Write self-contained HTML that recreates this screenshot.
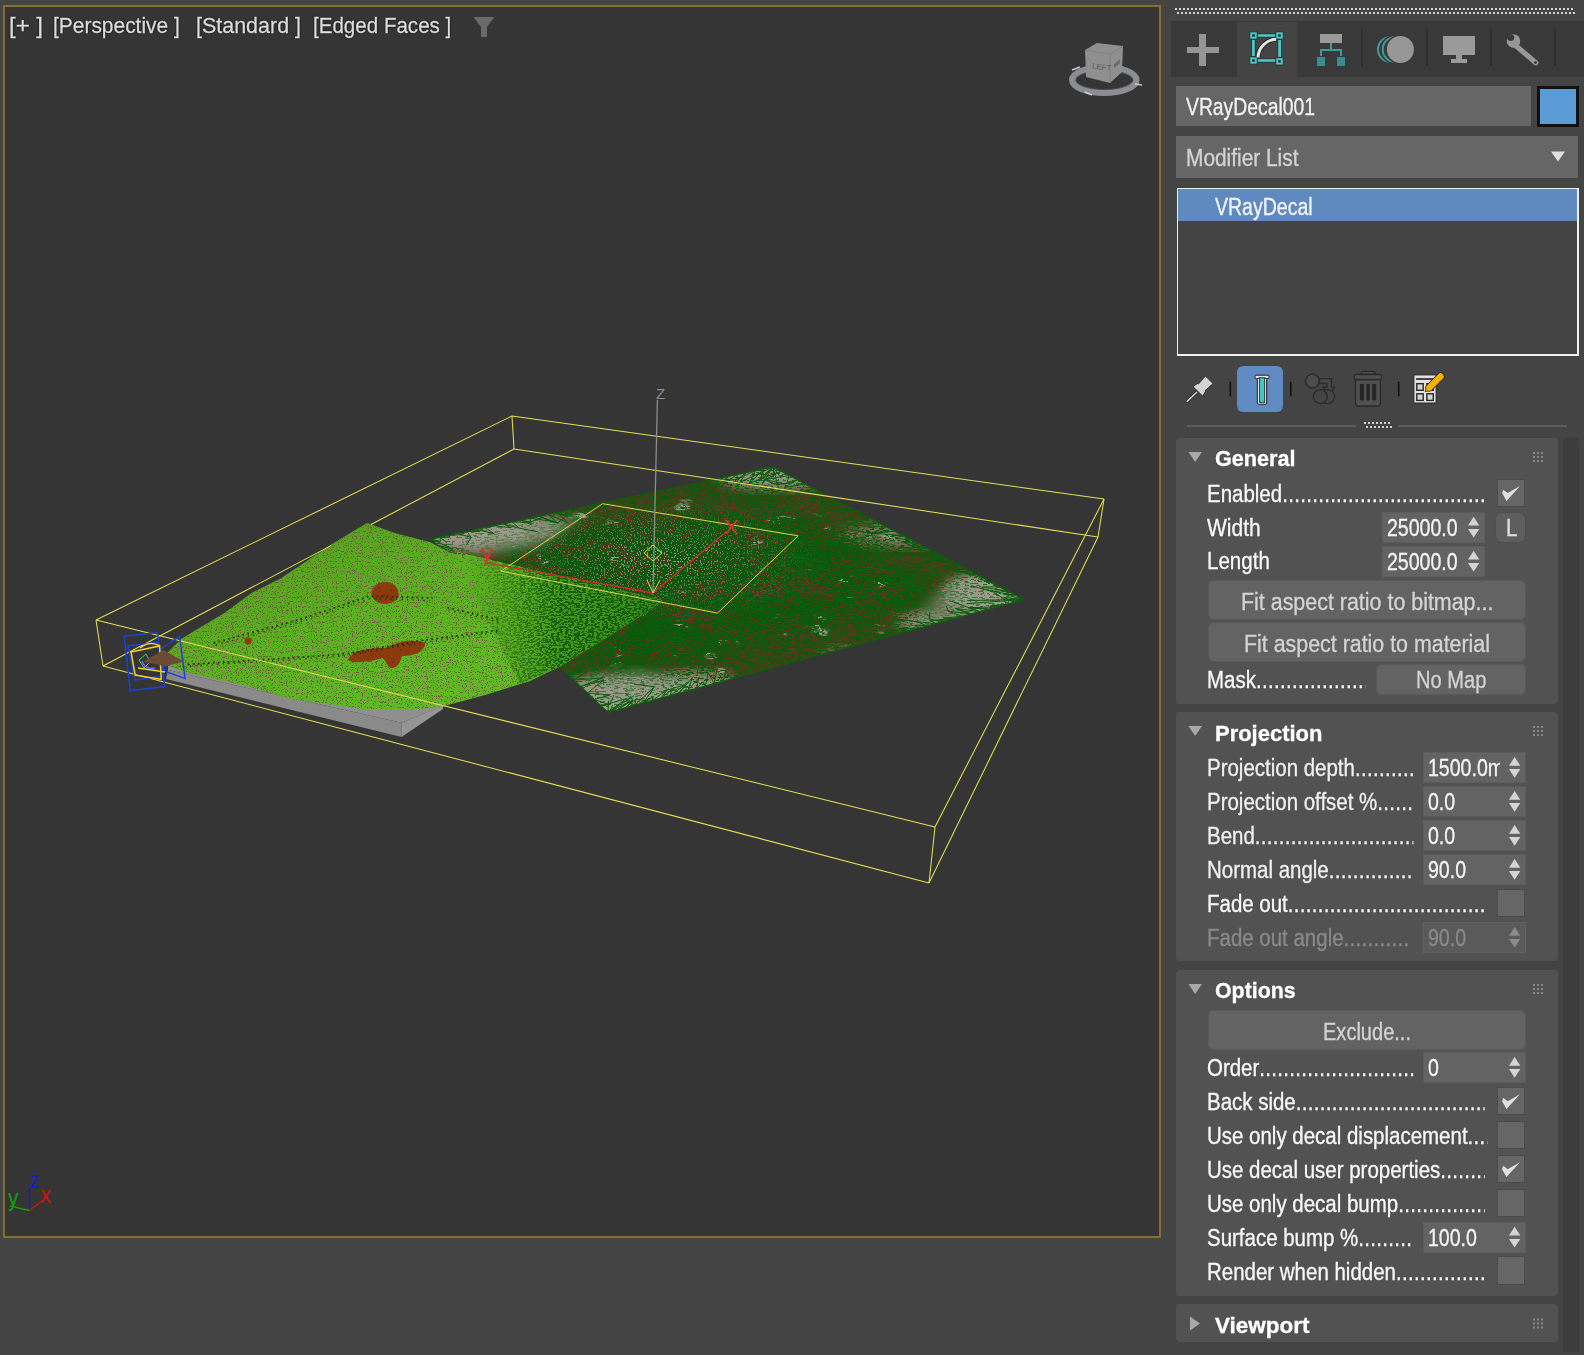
<!DOCTYPE html><html><head><meta charset="utf-8"><style>
html,body{margin:0;padding:0;}
body{width:1584px;height:1355px;background:#444444;position:relative;overflow:hidden;font-family:"Liberation Sans",sans-serif;}
.t{position:absolute;white-space:nowrap;transform-origin:0 0;-webkit-text-stroke:0.3px currentColor;}
.r{position:absolute;}
svg{position:absolute;left:0;top:0;}
</style></head><body>
<div class="r" style="left:3px;top:5px;width:1158px;height:1233px;background:#82702c;"></div>
<div class="r" style="left:5px;top:7px;width:1154px;height:1229px;background:#353535;"></div>
<svg width="1584" height="1355" viewBox="0 0 1584 1355">
<defs>
<clipPath id="vp"><rect x="5" y="7" width="1154" height="1229"/></clipPath>
<clipPath id="cdark"><polygon points="431.0,539.0 773.0,467.0 1024.0,599.5 608.0,712.5 560.0,667.0"/></clipPath>
<clipPath id="cgreen"><polygon points="158.0,662.0 181.5,638.8 224.4,613.0 252.3,592.6 280.2,578.7 331.7,544.3 367.1,522.9 396.1,533.6 430.4,542.2 450.0,553.0 478.0,557.0 662.0,600.0 652.0,609.0 561.0,666.0 530.0,681.0 485.0,695.0 444.0,706.0 420.0,709.0 362.0,709.0 291.0,699.0 251.0,687.0 185.0,672.0"/></clipPath>
<clipPath id="cmix"><polygon points="450.0,550.0 662.0,600.0 652.0,609.0 561.0,666.0 520.0,684.0"/></clipPath>
<filter id="beige" x="0" y="0" width="100%" height="100%" color-interpolation-filters="sRGB">
 <feTurbulence type="fractalNoise" baseFrequency="0.03 0.08" numOctaves="3" seed="3"/>
 <feColorMatrix type="matrix" values="0 0 0 0 0.62  0 0 0 0 0.6  0 0 0 0 0.55  -12 0 0 0 3.5"/>
</filter>
<filter id="greenspeck" x="0" y="0" width="100%" height="100%" color-interpolation-filters="sRGB">
 <feTurbulence type="fractalNoise" baseFrequency="0.2 0.7" numOctaves="2" seed="21"/>
 <feColorMatrix type="matrix" values="0 0 0 0 0.04  0 0 0 0 0.36  0 0 0 0 0.04  14 0 0 0 -7.6"/>
 <feComponentTransfer><feFuncA type="discrete" tableValues="0 1"/></feComponentTransfer>
</filter>
<filter id="greenspeck2" x="0" y="0" width="100%" height="100%" color-interpolation-filters="sRGB">
 <feTurbulence type="fractalNoise" baseFrequency="0.2 0.7" numOctaves="2" seed="22"/>
 <feColorMatrix type="matrix" values="0 0 0 0 0.04  0 0 0 0 0.36  0 0 0 0 0.04  14 0 0 0 -4.6"/>
 <feComponentTransfer><feFuncA type="discrete" tableValues="0 1"/></feComponentTransfer>
</filter>
<filter id="mottle" x="0" y="0" width="100%" height="100%" color-interpolation-filters="sRGB">
 <feTurbulence type="fractalNoise" baseFrequency="0.018 0.05" numOctaves="2" seed="4" result="low"/>
 <feColorMatrix in="low" type="matrix" values="1 0 0 0 0  1 0 0 0 0  1 0 0 0 0  0 0 0 0 1" result="lowo"/>
 <feTurbulence type="fractalNoise" baseFrequency="0.22 0.75" numOctaves="1" seed="8" result="high"/>
 <feColorMatrix in="high" type="matrix" values="1 0 0 0 0  1 0 0 0 0  1 0 0 0 0  0 0 0 0 1" result="higho"/>
 <feComposite in="lowo" in2="higho" operator="arithmetic" k1="0" k2="0.3" k3="0.7" k4="0" result="sum"/>
 <feColorMatrix in="sum" type="matrix" values="0 0 0 0 0.04  0 0 0 0 0.35  0 0 0 0 0.04  16 0 0 0 -6.9"/>
 <feComponentTransfer><feFuncA type="discrete" tableValues="0 1"/></feComponentTransfer>
</filter>
<filter id="grayspeck" x="0" y="0" width="100%" height="100%" color-interpolation-filters="sRGB">
 <feTurbulence type="fractalNoise" baseFrequency="0.7" numOctaves="1" seed="31"/>
 <feColorMatrix type="matrix" values="0 0 0 0 0.62  0 0 0 0 0.6  0 0 0 0 0.58  14 0 0 0 -8.0"/>
 <feComponentTransfer><feFuncA type="discrete" tableValues="0 1"/></feComponentTransfer>
</filter>
<filter id="olivespeck" x="0" y="0" width="100%" height="100%" color-interpolation-filters="sRGB">
 <feTurbulence type="fractalNoise" baseFrequency="0.8" numOctaves="1" seed="5"/>
 <feColorMatrix type="matrix" values="0 0 0 0 0.42  0 0 0 0 0.40  0 0 0 0 0.22  14 0 0 0 -8.0"/>
 <feComponentTransfer><feFuncA type="discrete" tableValues="0 1"/></feComponentTransfer>
</filter>
<filter id="mixspeck" x="0" y="0" width="100%" height="100%" color-interpolation-filters="sRGB">
 <feTurbulence type="fractalNoise" baseFrequency="0.35 0.6" numOctaves="1" seed="11"/>
 <feColorMatrix type="matrix" values="0 0 0 0 0.36  0 0 0 0 0.69  0 0 0 0 0.12  14 0 0 0 -6.6"/>
 <feComponentTransfer><feFuncA type="discrete" tableValues="0 1"/></feComponentTransfer>
</filter>
<filter id="blur1" color-interpolation-filters="sRGB"><feGaussianBlur stdDeviation="6"/></filter>
<linearGradient id="gmix" x1="474" y1="600" x2="640" y2="600" gradientUnits="userSpaceOnUse"><stop offset="0" stop-color="#5aae1f"/><stop offset="0.25" stop-color="#4f9f1c"/><stop offset="1" stop-color="#2c7614"/></linearGradient>
<linearGradient id="gshade" x1="300" y1="555" x2="360" y2="705" gradientUnits="userSpaceOnUse"><stop offset="0" stop-color="#4a6a18" stop-opacity="0.22"/><stop offset="0.5" stop-color="#4a6a18" stop-opacity="0.05"/><stop offset="1" stop-color="#8ee040" stop-opacity="0.08"/></linearGradient>
<radialGradient id="cgray" cx="0.5" cy="0.5" r="0.5"><stop offset="0" stop-color="#fff" stop-opacity="1"/><stop offset="1" stop-color="#fff" stop-opacity="0"/></radialGradient>
<linearGradient id="gmixa" x1="474" y1="600" x2="660" y2="600" gradientUnits="userSpaceOnUse"><stop offset="0" stop-color="#fff" stop-opacity="1"/><stop offset="0.25" stop-color="#fff" stop-opacity="0.8"/><stop offset="1" stop-color="#fff" stop-opacity="0.5"/></linearGradient>
<mask id="mmix"><rect x="440" y="540" width="240" height="150" fill="url(#gmixa)"/></mask>
<linearGradient id="gmixd" x1="465" y1="0" x2="560" y2="0" gradientUnits="userSpaceOnUse"><stop offset="0" stop-color="#fff" stop-opacity="0"/><stop offset="1" stop-color="#fff" stop-opacity="1"/></linearGradient>
<mask id="mmixd"><rect x="440" y="540" width="240" height="150" fill="url(#gmixd)"/></mask>
<mask id="mgray"><ellipse cx="660" cy="560" rx="170" ry="62" fill="url(#cgray)"/></mask>
<filter id="blur2" color-interpolation-filters="sRGB"><feGaussianBlur stdDeviation="14"/></filter>
<mask id="minner"><polygon points="480.0,545.0 773.0,490.0 975.0,598.0 625.0,685.0 580.0,660.0" fill="#fff" filter="url(#blur2)"/></mask>
</defs>
<g clip-path="url(#vp)">
<polygon points="168.0,666.0 443.0,700.0 443.0,706.0 401.5,722.8 168.0,670.0" fill="#8f8f8f"/>
<polygon points="168.0,670.0 401.5,722.8 401.5,737.0 166.0,679.0" fill="#8a8a8a"/>
<polygon points="401.5,722.8 443.0,705.7 443.0,709.0 401.5,737.0" fill="#959595"/>
<polygon points="431.0,539.0 773.0,467.0 1024.0,599.5 608.0,712.5 560.0,667.0" fill="#523a1e"/>
<g clip-path="url(#cdark)">
<rect x="420" y="460" width="620" height="260" filter="url(#beige)"/>
<ellipse cx="1010" cy="596" rx="70" ry="26" fill="#a39f90" opacity="1.0" filter="url(#blur1)"/>
<ellipse cx="640" cy="700" rx="95" ry="26" fill="#a39f90" opacity="1.0" filter="url(#blur1)"/>
<ellipse cx="773" cy="475" rx="55" ry="16" fill="#a39f90" opacity="0.9" filter="url(#blur1)"/>
<ellipse cx="470" cy="533" rx="60" ry="16" fill="#a39f90" opacity="1.0" filter="url(#blur1)"/>
<ellipse cx="520" cy="527" rx="45" ry="12" fill="#a39f90" opacity="0.9" filter="url(#blur1)"/>
<ellipse cx="900" cy="535" rx="60" ry="14" fill="#a39f90" opacity="0.6" filter="url(#blur1)"/>
<ellipse cx="700" cy="690" rx="40" ry="20" fill="#a39f90" opacity="0.8" filter="url(#blur1)"/>
<ellipse cx="950" cy="622" rx="55" ry="12" fill="#a39f90" opacity="0.8" filter="url(#blur1)"/>
<ellipse cx="860" cy="655" rx="40" ry="10" fill="#a39f90" opacity="0.6" filter="url(#blur1)"/>
<g mask="url(#minner)"><rect x="420" y="460" width="620" height="260" filter="url(#mottle)"/></g>
<rect x="420" y="460" width="620" height="260" filter="url(#greenspeck)"/>
<g mask="url(#mgray)"><rect x="480" y="490" width="360" height="140" filter="url(#grayspeck)"/></g>
<polygon points="431.0,539.0 520.0,519.0 585.0,515.0 540.0,545.0 478.0,556.0" fill="#9a978a" opacity="0.6" filter="url(#blur1)"/>
<polygon points="1024.0,599.5 960.0,575.0 930.0,600.0 900.0,640.0 960.0,625.0" fill="#9a978a" opacity="0.45" filter="url(#blur1)"/>
<polygon points="608.0,712.5 575.0,680.0 640.0,670.0 700.0,685.0" fill="#9a978a" opacity="0.45" filter="url(#blur1)"/>
<polygon points="773.0,467.0 745.0,478.0 800.0,485.0 830.0,492.0" fill="#9a978a" opacity="0.4" filter="url(#blur1)"/>
<path d="M431.0 539.0L440.4 541.5L440.0 537.1M440.0 537.1L449.5 537.4L449.0 535.2M449.5 537.4L449.9 530.0M449.0 535.2L459.3 534.8L458.0 533.3M459.3 534.8L475.6 528.8M458.0 533.3L471.2 537.6L467.0 531.4M471.2 537.6L466.1 545.3M467.0 531.4L479.9 531.5L476.0 529.5M479.9 531.5L460.8 528.4M476.0 529.5L494.1 533.6L485.0 527.6M494.1 533.6L487.7 534.3M485.0 527.6L488.5 527.4L494.0 525.7M488.5 527.4L484.9 524.4M494.0 525.7L511.1 527.8L503.0 523.8M503.0 523.8L519.4 528.2L512.0 521.9M519.4 528.2L538.2 531.9M512.0 521.9L530.2 522.3L521.0 520.1M530.2 522.3L543.0 516.8M521.0 520.1L531.1 524.7L530.0 518.2M530.0 518.2L551.4 521.3L539.0 516.3M551.4 521.3L556.1 522.6M539.0 516.3L557.8 523.0L548.0 514.4M557.8 523.0L566.0 516.0M548.0 514.4L568.2 522.8L557.0 512.5M557.0 512.5L567.2 517.2L566.0 510.6M567.2 517.2L565.3 511.9M566.0 510.6L569.4 515.3L575.0 508.7M569.4 515.3L556.8 513.5M575.0 508.7L589.8 516.1L584.0 506.8M589.8 516.1L609.0 521.2M584.0 506.8L600.5 514.5L593.0 504.9M600.5 514.5L619.7 521.8M593.0 504.9L597.5 507.3L602.0 503.0M597.5 507.3L596.7 508.7M602.0 503.0L605.6 507.6L611.0 501.1M605.6 507.6L608.9 514.8M611.0 501.1L625.6 510.5L620.0 499.2M625.6 510.5L603.3 516.9M620.0 499.2L639.1 510.9L629.0 497.3M639.1 510.9L634.0 504.6M629.0 497.3L635.6 504.0L638.0 495.4M635.6 504.0L618.7 501.4M638.0 495.4L636.9 497.8L647.0 493.5M636.9 497.8L630.1 490.2M647.0 493.5L659.8 503.9L656.0 491.6M659.8 503.9L652.2 501.7M656.0 491.6L664.4 500.2L665.0 489.7M664.4 500.2L663.5 493.6M665.0 489.7L666.4 493.9L674.0 487.8M674.0 487.8L671.0 496.9L683.0 485.9M671.0 496.9L653.3 497.6M683.0 485.9L684.7 493.8L692.0 484.1M692.0 484.1L690.7 495.5L701.0 482.2M690.7 495.5L704.3 496.1M701.0 482.2L698.8 493.7L710.0 480.3M710.0 480.3L711.9 497.5L719.0 478.4M719.0 478.4L712.1 491.1L728.0 476.5M712.1 491.1L688.6 483.5M728.0 476.5L722.0 485.2L737.0 474.6M737.0 474.6L737.3 486.7L746.0 472.7M746.0 472.7L737.3 479.2L755.0 470.8M737.3 479.2L722.5 481.2M755.0 470.8L748.9 483.9L764.0 468.9M748.9 483.9L763.9 477.2M764.0 468.9L759.6 481.1L773.0 467.0M760.7 477.3L775.7 484.8M773.0 467.0L764.1 477.5L781.1 471.3M781.1 471.3L765.3 479.5L789.2 475.5M765.3 479.5L785.5 484.4M789.2 475.5L786.6 483.5L797.3 479.8M786.6 483.5L779.1 484.2M797.3 479.8L784.6 487.3L805.4 484.1M784.6 487.3L785.9 494.2M805.4 484.1L798.7 492.8L813.5 488.4M798.7 492.8L786.3 489.5M813.5 488.4L805.3 491.9L821.6 492.6M805.3 491.9L786.9 498.4M821.6 492.6L809.9 498.5L829.7 496.9M829.7 496.9L822.0 502.4L837.8 501.2M822.0 502.4L823.2 494.7M837.8 501.2L820.6 503.4L845.9 505.5M845.9 505.5L835.9 510.2L854.0 509.7M835.9 510.2L827.2 510.5M854.0 509.7L841.4 512.4L862.1 514.0M841.4 512.4L828.8 508.8M862.1 514.0L842.3 520.0L870.2 518.3M870.2 518.3L847.0 524.7L878.3 522.6M847.0 524.7L847.6 527.7M878.3 522.6L863.6 525.9L886.4 526.8M886.4 526.8L871.4 533.5L894.5 531.1M871.4 533.5L874.4 540.5M894.5 531.1L868.0 532.9L902.5 535.4M868.0 532.9L846.6 528.7M902.5 535.4L895.6 538.5L910.6 539.7M910.6 539.7L902.8 542.1L918.7 543.9M902.8 542.1L921.9 549.6M918.7 543.9L912.5 544.8L926.8 548.2M912.5 544.8L937.0 550.1M926.8 548.2L915.3 549.5L934.9 552.5M915.3 549.5L900.1 546.6M934.9 552.5L908.4 554.8L943.0 556.8M908.4 554.8L884.3 552.1M943.0 556.8L924.1 555.7L951.1 561.0M951.1 561.0L934.7 560.2L959.2 565.3M934.7 560.2L911.7 564.7M959.2 565.3L942.0 565.6L967.3 569.6M967.3 569.6L941.8 568.5L975.4 573.9M975.4 573.9L959.6 572.0L983.5 578.1M959.6 572.0L969.0 570.8M983.5 578.1L979.5 579.2L991.6 582.4M991.6 582.4L986.4 580.0L999.7 586.7M999.7 586.7L981.6 587.1L1007.8 591.0M1007.8 591.0L990.5 591.1L1015.9 595.2M990.5 591.1L971.0 585.7M1015.9 595.2L1003.4 594.0L1024.0 599.5M1003.4 594.0L1016.4 590.6M1003.1 598.3L990.7 590.5M1024.0 599.5L1003.4 597.3L1015.1 601.9M1015.1 601.9L1003.8 599.2L1006.3 604.3M1006.3 604.3L990.5 605.9L997.4 606.7M990.5 605.9L990.8 608.9M997.4 606.7L969.9 607.8L988.6 609.1M988.6 609.1L968.0 607.4L979.7 611.5M968.0 607.4L949.5 600.6M979.7 611.5L955.5 608.5L970.9 613.9M955.5 608.5L972.6 614.4M970.9 613.9L948.3 611.3L962.0 616.3M948.3 611.3L946.3 605.8M962.0 616.3L943.3 618.1L953.2 618.7M953.2 618.7L932.4 620.3L944.3 621.1M932.4 620.3L925.2 612.3M944.3 621.1L929.3 620.0L935.5 623.5M929.3 620.0L929.5 612.1M935.5 623.5L917.9 621.9L926.6 625.9M917.9 621.9L894.1 618.7M926.6 625.9L915.6 625.0L917.8 628.4M917.8 628.4L900.8 628.6L908.9 630.8M900.8 628.6L892.2 636.3M908.9 630.8L901.1 630.4L900.1 633.2M901.1 630.4L917.9 636.7M900.1 633.2L884.0 632.6L891.2 635.6M884.0 632.6L885.2 632.7M891.2 635.6L872.5 634.3L882.4 638.0M872.5 634.3L892.1 637.2M882.4 638.0L859.3 632.0L873.5 640.4M859.3 632.0L852.4 625.7M873.5 640.4L852.1 637.3L864.7 642.8M852.1 637.3L861.1 637.1M864.7 642.8L860.6 642.8L855.8 645.2M860.6 642.8L862.3 645.3M855.8 645.2L850.0 641.9L847.0 647.6M850.0 641.9L838.3 645.5M847.0 647.6L839.0 647.9L838.1 650.0M839.0 647.9L833.1 647.5M838.1 650.0L822.7 645.8L829.3 652.4M822.7 645.8L801.6 640.2M829.3 652.4L820.9 647.9L820.4 654.8M820.9 647.9L796.5 640.9M820.4 654.8L811.2 652.3L811.6 657.2M811.2 652.3L800.7 652.6M811.6 657.2L797.2 649.8L802.7 659.6M802.7 659.6L798.9 658.3L793.9 662.0M798.9 658.3L796.8 663.4M793.9 662.0L773.1 651.3L785.0 664.4M773.1 651.3L795.4 646.7M785.0 664.4L766.8 657.3L776.2 666.8M776.2 666.8L772.7 662.4L767.3 669.2M767.3 669.2L750.7 662.2L758.5 671.6M750.7 662.2L727.0 654.2M758.5 671.6L748.1 662.2L749.6 674.0M748.1 662.2L740.3 659.3M749.6 674.0L731.9 663.6L740.8 676.4M740.8 676.4L741.5 672.2L731.9 678.8M731.9 678.8L725.9 670.7L723.1 681.2M723.1 681.2L716.8 670.0L714.2 683.6M716.8 670.0L694.2 663.6M714.2 683.6L708.2 672.6L705.4 686.1M708.2 672.6L696.5 672.8M705.4 686.1L703.2 682.0L696.5 688.5M696.5 688.5L698.9 677.4L687.7 690.9M687.7 690.9L692.5 677.5L678.8 693.3M678.8 693.3L685.1 684.7L670.0 695.7M685.1 684.7L662.5 691.5M670.0 695.7L672.4 688.8L661.1 698.1M672.4 688.8L684.4 696.4M661.1 698.1L667.3 689.7L652.3 700.5M667.3 689.7L662.0 684.4M652.3 700.5L653.1 696.9L643.4 702.9M653.1 696.9L639.1 703.4M643.4 702.9L654.4 686.8L634.6 705.3M654.4 686.8L634.0 684.3M634.6 705.3L636.2 698.8L625.7 707.7M636.2 698.8L655.5 702.8M625.7 707.7L632.9 700.0L616.9 710.1M632.9 700.0L624.8 693.0M616.9 710.1L629.9 701.4L608.0 712.5M629.9 701.4L636.3 707.2M612.4 705.3L609.7 712.6M608.0 712.5L626.5 698.5L601.1 706.0M601.1 706.0L609.2 704.5L594.3 699.5M609.2 704.5L613.6 696.5M594.3 699.5L609.9 695.0L587.4 693.0M587.4 693.0L603.2 680.3L580.6 686.5M603.2 680.3L604.3 683.2M580.6 686.5L602.6 678.0L573.7 680.0M573.7 680.0L587.6 671.6L566.9 673.5M566.9 673.5L582.2 670.5L560.0 667.0M582.2 670.5L563.6 666.5M579.4 659.0L580.7 660.4M560.0 667.0L569.8 663.3L553.5 660.6M553.5 660.6L558.5 658.2L547.1 654.2M547.1 654.2L569.8 649.5L540.6 647.8M569.8 649.5L557.1 656.9M540.6 647.8L557.8 640.7L534.2 641.4M557.8 640.7L566.5 639.4M534.2 641.4L548.3 641.7L527.8 635.0M548.3 641.7L525.0 639.1M527.8 635.0L545.0 630.8L521.3 628.6M521.3 628.6L542.2 624.1L514.9 622.2M514.9 622.2L532.1 619.2L508.4 615.8M532.1 619.2L545.1 615.9M508.4 615.8L533.3 611.9L501.9 609.4M533.3 611.9L529.1 614.6M501.9 609.4L522.7 607.3L495.5 603.0M522.7 607.3L546.4 601.6M495.5 603.0L499.1 602.0L489.1 596.6M489.1 596.6L515.7 599.1L482.6 590.2M482.6 590.2L492.8 592.8L476.1 583.8M476.1 583.8L486.7 583.2L469.7 577.4M486.7 583.2L478.3 577.9M469.7 577.4L475.1 576.8L463.2 571.0M463.2 571.0L479.0 569.7L456.8 564.6M479.0 569.7L495.1 574.9M456.8 564.6L467.1 565.4L450.4 558.2M467.1 565.4L488.1 560.5M450.4 558.2L469.6 556.5L443.9 551.8M469.6 556.5L485.1 560.8M443.9 551.8L447.0 549.9L437.4 545.4M437.4 545.4L452.9 549.1L431.0 539.0M452.9 549.1L441.5 556.4M446.9 542.4L435.7 534.5M1024.0 599.5l2.0 -25.3M1024.0 599.5l-38.3 -19.3M1024.0 599.5l25.2 1.7M1024.0 599.5l-57.4 4.1M1024.0 599.5l31.0 -4.2M1024.0 599.5l-0.2 15.5M1024.0 599.5l-56.7 1.0M1024.0 599.5l20.9 21.0M1024.0 599.5l-3.8 -23.3M1024.0 599.5l6.0 -18.9M1024.0 599.5l-13.8 11.7M1024.0 599.5l-32.4 17.2M608.0 712.5l21.0 5.1M608.0 712.5l0.5 -11.8M608.0 712.5l15.2 2.9M608.0 712.5l-28.1 -4.3M608.0 712.5l54.3 -3.0M608.0 712.5l26.8 -0.9M608.0 712.5l16.7 4.4M608.0 712.5l-46.9 0.2M608.0 712.5l-24.1 3.8M608.0 712.5l-37.2 9.6M608.0 712.5l-22.3 -19.5M608.0 712.5l25.7 -16.6M773.0 467.0l38.3 16.4M773.0 467.0l-11.0 17.5M773.0 467.0l-33.7 15.5M773.0 467.0l8.2 11.2M773.0 467.0l0.6 9.9M773.0 467.0l30.6 -12.3M773.0 467.0l-15.1 13.1M773.0 467.0l37.8 -0.8M773.0 467.0l6.0 23.0M773.0 467.0l-34.0 -22.0M773.0 467.0l29.1 9.8M773.0 467.0l22.2 -21.6" stroke="#0c5a0c" stroke-width="1" fill="none"/>
</g>
<polygon points="431.0,539.0 773.0,467.0 1024.0,599.5 608.0,712.5 560.0,667.0" fill="none" stroke="#0e5c0e" stroke-width="1.3"/>
<polygon points="158.0,662.0 181.5,638.8 224.4,613.0 252.3,592.6 280.2,578.7 331.7,544.3 367.1,522.9 396.1,533.6 430.4,542.2 450.0,553.0 478.0,557.0 662.0,600.0 652.0,609.0 561.0,666.0 530.0,681.0 485.0,695.0 444.0,706.0 420.0,709.0 362.0,709.0 291.0,699.0 251.0,687.0 185.0,672.0" fill="#5cb421"/>
<g clip-path="url(#cgreen)">
<rect x="150" y="515" width="500" height="200" fill="url(#gshade)"/>
<rect x="150" y="515" width="500" height="200" filter="url(#olivespeck)"/>
</g>
<g clip-path="url(#cmix)">
<g mask="url(#mmixd)"><polygon points="450.0,550.0 662.0,600.0 652.0,609.0 561.0,666.0 520.0,684.0" fill="#15600f"/></g>
<g mask="url(#mmix)"><rect x="440" y="540" width="240" height="150" filter="url(#mixspeck)"/></g>
</g>
<ellipse cx="385" cy="593" rx="13.4" ry="11" fill="#8a3a0c"/>
<path d="M348 660 C352 650 368 648 385 648 C398 642 412 638 425 643 C425 652 414 656 402 656 C400 662 399 668 390 668 C386 664 386 660 382 658 C370 662 352 664 348 660Z" fill="#8a3a0c"/>
<circle cx="248" cy="641" r="3.5" fill="#8a3a0c"/>
<g opacity="0.55"><path d="M378 588l2 0M384 595l1 1M390 590l2 0M375 598l2 1M392 600l1 0M362 652l2 0M380 648l1 1M400 650l2 0M410 645l2 0M392 662l1 1M370 655l2 0" stroke="#2a3a10" stroke-width="1.5"/></g>
<path d="M213.7 643 L299.5 619.5 L370 596 L432.6 598 M447.6 607.7 L500 620 M188 664.5 L288.8 658 L346.7 653.8 L417.6 641 L500 630" stroke="#0a0e05" stroke-width="1.6" stroke-dasharray="1.5 3.5" fill="none" opacity="0.9"/>
<path d="M216 645 L301 621.5 L371 598.5 L432 600.5 M449 610 L500 622.5 M190 666 L290 660 L348 655.5 L418 643 L500 632" stroke="#0a0e05" stroke-width="1.4" stroke-dasharray="1 4.5" fill="none" opacity="0.8"/>
<path d="M336 570 L500 602" stroke="#777a66" stroke-width="1" fill="none" opacity="0.7"/>
<line x1="96" y1="620" x2="512" y2="416" stroke="#e3de52" stroke-width="1.05"/>
<line x1="512" y1="416" x2="1104" y2="499" stroke="#e3de52" stroke-width="1.05"/>
<line x1="1104" y1="499" x2="935" y2="827" stroke="#e3de52" stroke-width="1.05"/>
<line x1="935" y1="827" x2="96" y2="620" stroke="#e3de52" stroke-width="1.05"/>
<line x1="103" y1="666" x2="331" y2="545.6" stroke="#e3de52" stroke-width="1.05"/>
<line x1="371" y1="524.5" x2="514" y2="449" stroke="#e3de52" stroke-width="1.05"/>
<line x1="514" y1="449" x2="1098" y2="537" stroke="#e3de52" stroke-width="1.05"/>
<line x1="1098" y1="537" x2="929" y2="883" stroke="#e3de52" stroke-width="1.05"/>
<line x1="929" y1="883" x2="103" y2="666" stroke="#e3de52" stroke-width="1.05"/>
<line x1="96" y1="620" x2="103" y2="666" stroke="#e3de52" stroke-width="1.05"/>
<line x1="512" y1="416" x2="514" y2="449" stroke="#e3de52" stroke-width="1.05"/>
<line x1="1104" y1="499" x2="1098" y2="537" stroke="#e3de52" stroke-width="1.05"/>
<line x1="935" y1="827" x2="929" y2="883" stroke="#e3de52" stroke-width="1.05"/>
<polygon points="602.6,503.7 798.1,535.8 717.5,613.1 500.9,571.1" fill="none" stroke="#dcd64a" stroke-width="1"/>
<line x1="657.4" y1="400" x2="653" y2="593" stroke="#8c8c8c" stroke-width="1.3"/>
<text x="656" y="399" font-family="Liberation Sans" font-size="15" fill="#8c8c8c">Z</text>
<line x1="653" y1="593" x2="726" y2="532" stroke="#d02c2c" stroke-width="1.3"/>
<line x1="653" y1="593" x2="487" y2="563" stroke="#d02c2c" stroke-width="1.3"/>
<path d="M726 520 L737 534 M737 520 L726 534" stroke="#d83030" stroke-width="2"/>
<path d="M482 548 L487 559 M492 548 L485 565" stroke="#d83030" stroke-width="2"/>
<polygon points="653,545 662,553 653,561 644,553" fill="none" stroke="#dcd64a" stroke-width="1"/>
<path d="M647 580 L653 593 L660 580" stroke="#dcd64a" stroke-width="1" fill="none"/>
<g fill="none" stroke-width="1.5">
<polygon points="124.2,636.3 157.5,632.6 164.8,686.6 130.3,690.7" stroke="#1a44d6"/>
<polygon points="127.9,646 158,642 163.6,676 135.2,680" stroke="#1a44d6"/>
<polygon points="161.2,648.5 179.5,636.3 185.1,678.5 164.4,671.2" stroke="#1a44d6"/>
<polygon points="131,652 159.6,646 161.2,679.3 135.2,675.2" stroke="#f0d020"/>
<path d="M140 648 Q150 640 160 646 M138 668 L165 672" stroke="#f0d020"/>
<path d="M139 660 L146 654 L150 662 L144 668 Z" stroke="#40d060" stroke-width="1"/>
<path d="M142 661 Q145 670 155 668" stroke="#6a6af0" stroke-width="1.5"/>
</g>
<polygon points="143.3,661.4 163.6,650 183.9,661.4 165.2,666.3" fill="#6b4a35"/>
<line x1="29.5" y1="1210.5" x2="29.5" y2="1188" stroke="#1414e6" stroke-width="1.4"/>
<line x1="29.5" y1="1210.5" x2="42.5" y2="1200.5" stroke="#d01010" stroke-width="1.4"/>
<line x1="29.5" y1="1210.5" x2="10" y2="1206" stroke="#10a010" stroke-width="1.4"/>
<text transform="translate(29.8 1188.3) scale(0.82 1)" font-family="Liberation Sans" font-size="23" fill="#1414e6">z</text>
<text transform="translate(40.2 1202.5) scale(0.9 1)" font-family="Liberation Sans" font-size="24" fill="#d01010">x</text>
<text transform="translate(8 1205.5) scale(0.9 1)" font-family="Liberation Sans" font-size="23" fill="#10a010">y</text>
<ellipse cx="1104.3" cy="80" rx="32" ry="12.8" fill="none" stroke="#8a8e92" stroke-width="6.5"/>
<ellipse cx="1104.3" cy="80" rx="28.6" ry="9.6" fill="none" stroke="#4a4e52" stroke-width="0.8"/>
<polygon points="1085,50 1097,43 1123,46 1122,72 1110,83 1086,77" fill="#8f8f8f"/>
<path d="M1110 54 L1123 46 M1110 54 L1110 83 M1085 50 L1110 54" stroke="#7a7a7a" stroke-width="0.6" fill="none"/>
<text x="1092" y="69" font-family="Liberation Sans" font-size="8" fill="#5c5c5c" transform="rotate(8 1097 66)">LEFT</text>
<path d="M1120 59 L1114 64 L1114 68 L1120 63 Z" fill="#6a6a6a"/>
<path d="M1072 70 L1080 67 M1085 92 L1092 95 M1135 84 L1142 85" stroke="#c8c8c8" stroke-width="1.6"/>
</g></svg>
<div class="t" style="left:9.40px;top:15.40px;font-size:22px;line-height:22px;color:#dcdcdc;font-weight:normal;transform:scaleX(1.0902);text-shadow:0 0 2px #000,0 0 1px #000;">[+ ]</div>
<div class="t" style="left:53.00px;top:15.40px;font-size:22px;line-height:22px;color:#dcdcdc;font-weight:normal;transform:scaleX(0.9514);text-shadow:0 0 2px #000,0 0 1px #000;">[Perspective ]</div>
<div class="t" style="left:196.00px;top:15.40px;font-size:22px;line-height:22px;color:#dcdcdc;font-weight:normal;transform:scaleX(0.9756);text-shadow:0 0 2px #000,0 0 1px #000;">[Standard ]</div>
<div class="t" style="left:313.40px;top:15.40px;font-size:22px;line-height:22px;color:#dcdcdc;font-weight:normal;transform:scaleX(0.9346);text-shadow:0 0 2px #000,0 0 1px #000;">[Edged Faces ]</div>
<svg width="1584" height="60"><path d="M473.5 17 L494.3 17 L487 27 L487 37 L481 37 L481 27 Z" fill="#6a6a6a"/></svg>
<svg width="1584" height="30" style="left:0;top:0"><g fill="#d8d8d8"><rect x="1175" y="8" width="2" height="2"/><rect x="1177" y="12" width="2" height="2"/><rect x="1179" y="8" width="2" height="2"/><rect x="1181" y="12" width="2" height="2"/><rect x="1183" y="8" width="2" height="2"/><rect x="1185" y="12" width="2" height="2"/><rect x="1187" y="8" width="2" height="2"/><rect x="1189" y="12" width="2" height="2"/><rect x="1191" y="8" width="2" height="2"/><rect x="1193" y="12" width="2" height="2"/><rect x="1195" y="8" width="2" height="2"/><rect x="1197" y="12" width="2" height="2"/><rect x="1199" y="8" width="2" height="2"/><rect x="1201" y="12" width="2" height="2"/><rect x="1203" y="8" width="2" height="2"/><rect x="1205" y="12" width="2" height="2"/><rect x="1207" y="8" width="2" height="2"/><rect x="1209" y="12" width="2" height="2"/><rect x="1211" y="8" width="2" height="2"/><rect x="1213" y="12" width="2" height="2"/><rect x="1215" y="8" width="2" height="2"/><rect x="1217" y="12" width="2" height="2"/><rect x="1219" y="8" width="2" height="2"/><rect x="1221" y="12" width="2" height="2"/><rect x="1223" y="8" width="2" height="2"/><rect x="1225" y="12" width="2" height="2"/><rect x="1227" y="8" width="2" height="2"/><rect x="1229" y="12" width="2" height="2"/><rect x="1231" y="8" width="2" height="2"/><rect x="1233" y="12" width="2" height="2"/><rect x="1235" y="8" width="2" height="2"/><rect x="1237" y="12" width="2" height="2"/><rect x="1239" y="8" width="2" height="2"/><rect x="1241" y="12" width="2" height="2"/><rect x="1243" y="8" width="2" height="2"/><rect x="1245" y="12" width="2" height="2"/><rect x="1247" y="8" width="2" height="2"/><rect x="1249" y="12" width="2" height="2"/><rect x="1251" y="8" width="2" height="2"/><rect x="1253" y="12" width="2" height="2"/><rect x="1255" y="8" width="2" height="2"/><rect x="1257" y="12" width="2" height="2"/><rect x="1259" y="8" width="2" height="2"/><rect x="1261" y="12" width="2" height="2"/><rect x="1263" y="8" width="2" height="2"/><rect x="1265" y="12" width="2" height="2"/><rect x="1267" y="8" width="2" height="2"/><rect x="1269" y="12" width="2" height="2"/><rect x="1271" y="8" width="2" height="2"/><rect x="1273" y="12" width="2" height="2"/><rect x="1275" y="8" width="2" height="2"/><rect x="1277" y="12" width="2" height="2"/><rect x="1279" y="8" width="2" height="2"/><rect x="1281" y="12" width="2" height="2"/><rect x="1283" y="8" width="2" height="2"/><rect x="1285" y="12" width="2" height="2"/><rect x="1287" y="8" width="2" height="2"/><rect x="1289" y="12" width="2" height="2"/><rect x="1291" y="8" width="2" height="2"/><rect x="1293" y="12" width="2" height="2"/><rect x="1295" y="8" width="2" height="2"/><rect x="1297" y="12" width="2" height="2"/><rect x="1299" y="8" width="2" height="2"/><rect x="1301" y="12" width="2" height="2"/><rect x="1303" y="8" width="2" height="2"/><rect x="1305" y="12" width="2" height="2"/><rect x="1307" y="8" width="2" height="2"/><rect x="1309" y="12" width="2" height="2"/><rect x="1311" y="8" width="2" height="2"/><rect x="1313" y="12" width="2" height="2"/><rect x="1315" y="8" width="2" height="2"/><rect x="1317" y="12" width="2" height="2"/><rect x="1319" y="8" width="2" height="2"/><rect x="1321" y="12" width="2" height="2"/><rect x="1323" y="8" width="2" height="2"/><rect x="1325" y="12" width="2" height="2"/><rect x="1327" y="8" width="2" height="2"/><rect x="1329" y="12" width="2" height="2"/><rect x="1331" y="8" width="2" height="2"/><rect x="1333" y="12" width="2" height="2"/><rect x="1335" y="8" width="2" height="2"/><rect x="1337" y="12" width="2" height="2"/><rect x="1339" y="8" width="2" height="2"/><rect x="1341" y="12" width="2" height="2"/><rect x="1343" y="8" width="2" height="2"/><rect x="1345" y="12" width="2" height="2"/><rect x="1347" y="8" width="2" height="2"/><rect x="1349" y="12" width="2" height="2"/><rect x="1351" y="8" width="2" height="2"/><rect x="1353" y="12" width="2" height="2"/><rect x="1355" y="8" width="2" height="2"/><rect x="1357" y="12" width="2" height="2"/><rect x="1359" y="8" width="2" height="2"/><rect x="1361" y="12" width="2" height="2"/><rect x="1363" y="8" width="2" height="2"/><rect x="1365" y="12" width="2" height="2"/><rect x="1367" y="8" width="2" height="2"/><rect x="1369" y="12" width="2" height="2"/><rect x="1371" y="8" width="2" height="2"/><rect x="1373" y="12" width="2" height="2"/><rect x="1375" y="8" width="2" height="2"/><rect x="1377" y="12" width="2" height="2"/><rect x="1379" y="8" width="2" height="2"/><rect x="1381" y="12" width="2" height="2"/><rect x="1383" y="8" width="2" height="2"/><rect x="1385" y="12" width="2" height="2"/><rect x="1387" y="8" width="2" height="2"/><rect x="1389" y="12" width="2" height="2"/><rect x="1391" y="8" width="2" height="2"/><rect x="1393" y="12" width="2" height="2"/><rect x="1395" y="8" width="2" height="2"/><rect x="1397" y="12" width="2" height="2"/><rect x="1399" y="8" width="2" height="2"/><rect x="1401" y="12" width="2" height="2"/><rect x="1403" y="8" width="2" height="2"/><rect x="1405" y="12" width="2" height="2"/><rect x="1407" y="8" width="2" height="2"/><rect x="1409" y="12" width="2" height="2"/><rect x="1411" y="8" width="2" height="2"/><rect x="1413" y="12" width="2" height="2"/><rect x="1415" y="8" width="2" height="2"/><rect x="1417" y="12" width="2" height="2"/><rect x="1419" y="8" width="2" height="2"/><rect x="1421" y="12" width="2" height="2"/><rect x="1423" y="8" width="2" height="2"/><rect x="1425" y="12" width="2" height="2"/><rect x="1427" y="8" width="2" height="2"/><rect x="1429" y="12" width="2" height="2"/><rect x="1431" y="8" width="2" height="2"/><rect x="1433" y="12" width="2" height="2"/><rect x="1435" y="8" width="2" height="2"/><rect x="1437" y="12" width="2" height="2"/><rect x="1439" y="8" width="2" height="2"/><rect x="1441" y="12" width="2" height="2"/><rect x="1443" y="8" width="2" height="2"/><rect x="1445" y="12" width="2" height="2"/><rect x="1447" y="8" width="2" height="2"/><rect x="1449" y="12" width="2" height="2"/><rect x="1451" y="8" width="2" height="2"/><rect x="1453" y="12" width="2" height="2"/><rect x="1455" y="8" width="2" height="2"/><rect x="1457" y="12" width="2" height="2"/><rect x="1459" y="8" width="2" height="2"/><rect x="1461" y="12" width="2" height="2"/><rect x="1463" y="8" width="2" height="2"/><rect x="1465" y="12" width="2" height="2"/><rect x="1467" y="8" width="2" height="2"/><rect x="1469" y="12" width="2" height="2"/><rect x="1471" y="8" width="2" height="2"/><rect x="1473" y="12" width="2" height="2"/><rect x="1475" y="8" width="2" height="2"/><rect x="1477" y="12" width="2" height="2"/><rect x="1479" y="8" width="2" height="2"/><rect x="1481" y="12" width="2" height="2"/><rect x="1483" y="8" width="2" height="2"/><rect x="1485" y="12" width="2" height="2"/><rect x="1487" y="8" width="2" height="2"/><rect x="1489" y="12" width="2" height="2"/><rect x="1491" y="8" width="2" height="2"/><rect x="1493" y="12" width="2" height="2"/><rect x="1495" y="8" width="2" height="2"/><rect x="1497" y="12" width="2" height="2"/><rect x="1499" y="8" width="2" height="2"/><rect x="1501" y="12" width="2" height="2"/><rect x="1503" y="8" width="2" height="2"/><rect x="1505" y="12" width="2" height="2"/><rect x="1507" y="8" width="2" height="2"/><rect x="1509" y="12" width="2" height="2"/><rect x="1511" y="8" width="2" height="2"/><rect x="1513" y="12" width="2" height="2"/><rect x="1515" y="8" width="2" height="2"/><rect x="1517" y="12" width="2" height="2"/><rect x="1519" y="8" width="2" height="2"/><rect x="1521" y="12" width="2" height="2"/><rect x="1523" y="8" width="2" height="2"/><rect x="1525" y="12" width="2" height="2"/><rect x="1527" y="8" width="2" height="2"/><rect x="1529" y="12" width="2" height="2"/><rect x="1531" y="8" width="2" height="2"/><rect x="1533" y="12" width="2" height="2"/><rect x="1535" y="8" width="2" height="2"/><rect x="1537" y="12" width="2" height="2"/><rect x="1539" y="8" width="2" height="2"/><rect x="1541" y="12" width="2" height="2"/><rect x="1543" y="8" width="2" height="2"/><rect x="1545" y="12" width="2" height="2"/><rect x="1547" y="8" width="2" height="2"/><rect x="1549" y="12" width="2" height="2"/><rect x="1551" y="8" width="2" height="2"/><rect x="1553" y="12" width="2" height="2"/><rect x="1555" y="8" width="2" height="2"/><rect x="1557" y="12" width="2" height="2"/><rect x="1559" y="8" width="2" height="2"/><rect x="1561" y="12" width="2" height="2"/><rect x="1563" y="8" width="2" height="2"/><rect x="1565" y="12" width="2" height="2"/><rect x="1567" y="8" width="2" height="2"/><rect x="1569" y="12" width="2" height="2"/><rect x="1571" y="8" width="2" height="2"/><rect x="1573" y="12" width="2" height="2"/></g></svg>
<div class="r" style="left:1171px;top:21px;width:413px;height:56px;background:#393939;"></div>
<div class="r" style="left:1237px;top:22px;width:60px;height:55px;background:#444444;"></div>
<div class="r" style="left:1361px;top:29px;width:2px;height:37px;background:#2e2e2e;"></div>
<div class="r" style="left:1426px;top:29px;width:2px;height:37px;background:#2e2e2e;"></div>
<div class="r" style="left:1490px;top:29px;width:2px;height:37px;background:#2e2e2e;"></div>
<div class="r" style="left:1554px;top:29px;width:2px;height:37px;background:#2e2e2e;"></div>
<svg width="1584" height="80" style="left:0;top:0"><rect x="1199" y="34" width="7" height="32" fill="#959595"/><rect x="1187" y="47" width="32" height="6" fill="#959595"/><g stroke="#2a2424" stroke-width="0.8" fill="#4cc8c8"><rect x="1257.5" y="33.8" width="18" height="3.4"/><rect x="1257.5" y="58.8" width="18" height="3.4"/><rect x="1251.6" y="39.3" width="3.6" height="17.2"/><rect x="1277.8" y="39.3" width="3.6" height="18"/><rect x="1249.8" y="31.9" width="7.4" height="7.2"/><rect x="1275.8" y="31.9" width="7.4" height="7.2"/><rect x="1249.8" y="56.9" width="7.4" height="7.2"/><rect x="1275.8" y="57.8" width="7.4" height="7.2"/></g><rect x="1252.2" y="34.3" width="2.6" height="2.4" fill="#2a2424"/><rect x="1278.2" y="34.3" width="2.6" height="2.4" fill="#2a2424"/><rect x="1252.2" y="59.3" width="2.6" height="2.4" fill="#2a2424"/><rect x="1278.2" y="60.199999999999996" width="2.6" height="2.4" fill="#2a2424"/><path d="M1258 57.5 A19 19 0 0 1 1276 39.2" stroke="#1c1c1c" stroke-width="4.6" fill="none"/><path d="M1258 57.5 A19 19 0 0 1 1276 39.2" stroke="#e2e2e2" stroke-width="3" fill="none"/><rect x="1320" y="34" width="22" height="9" fill="#9a9a9a"/><path d="M1331 43 V50 M1321 56 V50 H1341 V56" stroke="#3f9a9a" stroke-width="2" fill="none"/><rect x="1317" y="57" width="8" height="9" fill="#3a8c8c"/><rect x="1337" y="57" width="8" height="9" fill="#3a8c8c"/><circle cx="1390.5" cy="49.4" r="12.5" fill="none" stroke="#3f9999" stroke-width="2"/><circle cx="1395.2" cy="49.4" r="15" fill="#393939"/><circle cx="1395.2" cy="49.4" r="12.5" fill="none" stroke="#3f9999" stroke-width="2"/><circle cx="1400.4" cy="49.4" r="15" fill="#393939"/><circle cx="1400.4" cy="49.4" r="13.5" fill="#979797"/><rect x="1443" y="36" width="32" height="19" fill="#9a9a9a"/><rect x="1456" y="55" width="6" height="4" fill="#9a9a9a"/><rect x="1451" y="59" width="16" height="4" fill="#9a9a9a"/><path d="M1515 45 L1535.8 62.7" stroke="#979797" stroke-width="5.2" stroke-linecap="round"/><circle cx="1513.5" cy="41" r="6.8" fill="#979797"/><circle cx="1510.8" cy="37.6" r="3.4" fill="#393939"/><path d="M1507 40 L1510 34 L1504 34 Z" fill="#393939"/><circle cx="1535.5" cy="62.6" r="1.4" fill="#393939"/></svg>
<div class="r" style="left:1176px;top:86px;width:355px;height:40px;background:#666666;"></div>
<div class="t" style="left:1185.50px;top:96.39px;font-size:23px;line-height:23px;color:#f2f2f2;font-weight:normal;transform:scaleX(0.8408);">VRayDecal001</div>
<div class="r" style="left:1537px;top:86px;width:42px;height:41px;background:#111111;"></div>
<div class="r" style="left:1540px;top:89px;width:36px;height:35px;background:#5b9bd6;"></div>
<div class="r" style="left:1176px;top:136px;width:402px;height:42px;background:#666666;"></div>
<div class="t" style="left:1186.30px;top:147.39px;font-size:23px;line-height:23px;color:#d4d4d4;font-weight:normal;transform:scaleX(0.9073);">Modifier List</div>
<svg width="1584" height="200" style="left:0;top:0"><polygon points="1551,151.6 1565,151.6 1558,161.4" fill="#e0e0e0"/></svg>
<div class="r" style="left:1176.5px;top:187.5px;width:402.0px;height:168.0px;background:#f0f0f0;"></div>
<div class="r" style="left:1178px;top:189px;width:399px;height:165px;background:#444444;"></div>
<div class="r" style="left:1178px;top:189px;width:399px;height:32px;background:#5f8ac0;"></div>
<div class="t" style="left:1215.20px;top:196.39px;font-size:23px;line-height:23px;color:#f4f4f4;font-weight:normal;transform:scaleX(0.8484);">VRayDecal</div>
<svg width="1584" height="440" style="left:0;top:0"><path d="M1187.2 401.4 L1196.7 392.3" stroke="#222" stroke-width="3" stroke-linecap="round"/><path d="M1187.2 401.4 L1196.7 392.3" stroke="#d8d8d8" stroke-width="1.5" stroke-linecap="round"/><path d="M1192.9 386.6 L1197.4 383.6 L1198.6 383.9 Q1201.5 380.5 1205.4 376 L1213 383.6 Q1208.5 387.5 1205 390.8 L1205.4 391.5 L1202.7 396.1 Z" fill="#d4d4d4" stroke="#2a2a2a" stroke-width="0.9"/><rect x="1229.5" y="381.7" width="1.6" height="14.5" fill="#111"/><rect x="1290.0" y="381.7" width="1.6" height="14.5" fill="#111"/><rect x="1397.9" y="381.7" width="1.6" height="14.5" fill="#111"/><rect x="1237" y="366" width="46" height="46" rx="6" fill="#5f8ac2"/><rect x="1255.1" y="375.2" width="13.8" height="3.5" rx="1" fill="#e6e6e6" stroke="#1e1e1e" stroke-width="1"/><rect x="1257.3" y="378.2" width="9.4" height="26" rx="1.2" fill="#e6e6e6" stroke="#1e1e1e" stroke-width="1"/><rect x="1259.5" y="377.8" width="5.2" height="24.5" fill="#48c4c2" stroke="#1e1e1e" stroke-width="0.8"/><g stroke="#2a2a2a" stroke-width="1.3"><circle cx="1312.4" cy="381.1" r="6.9" fill="#4c4c4c"/><path d="M1319.4 378.6 H1331.4 V387.2 H1334.5 L1328.8 396 L1323.1 387.2 H1327 V383.3 H1319.4 Z" fill="#474747"/><circle cx="1327.6" cy="396.6" r="7" fill="#454545"/><circle cx="1320.3" cy="396.6" r="6.9" fill="#454545"/></g><g stroke="#2a2a2a" stroke-width="1.3" fill="#505050"><path d="M1361 374.5 Q1361.5 371.3 1364 371.3 H1372.5 Q1375 371.3 1375.5 374.5 Z"/><rect x="1354.4" y="374.5" width="27.1" height="5" rx="1"/><path d="M1355.5 379.8 H1380.4 V403 Q1380.4 406 1377.4 406 H1358.5 Q1355.5 406 1355.5 403 Z"/></g><rect x="1359.8" y="383.9" width="4.1" height="16.5" fill="#262626"/><rect x="1366.4" y="383.9" width="3.5" height="16.5" fill="#262626"/><rect x="1372.1" y="383.9" width="4.1" height="16.5" fill="#262626"/><rect x="1413.9" y="374.9" width="22.2" height="28.1" fill="#e2e2e2" stroke="#262626" stroke-width="1"/><rect x="1416.1" y="378.2" width="18.4" height="1.6" fill="#1e1e1e"/><g fill="#d4d4d4" stroke="#262626" stroke-width="1.4"><rect x="1416.8" y="383.7" width="6.4" height="6.6"/><rect x="1426.9" y="383.7" width="6.4" height="6.6"/><rect x="1416.8" y="393.8" width="6.4" height="6.6"/><rect x="1426.9" y="393.8" width="6.4" height="6.6"/></g><path d="M1429.5 387.5 L1440.5 376.5" stroke="#222" stroke-width="8" stroke-linecap="round"/><path d="M1425.2 391.7 L1427 385 L1432 390 Z" fill="#f2b000" stroke="#222" stroke-width="0.8"/><path d="M1429.5 387.5 L1440.5 376.5" stroke="#f2b000" stroke-width="6.4" stroke-linecap="round"/><rect x="1187" y="425" width="169" height="2" fill="#5c5c5c"/><rect x="1398" y="425" width="169" height="2" fill="#5c5c5c"/><rect x="1364" y="422" width="2" height="2" fill="#d0d0d0"/><rect x="1366" y="426" width="2" height="2" fill="#d0d0d0"/><rect x="1368" y="422" width="2" height="2" fill="#d0d0d0"/><rect x="1370" y="426" width="2" height="2" fill="#d0d0d0"/><rect x="1372" y="422" width="2" height="2" fill="#d0d0d0"/><rect x="1374" y="426" width="2" height="2" fill="#d0d0d0"/><rect x="1376" y="422" width="2" height="2" fill="#d0d0d0"/><rect x="1378" y="426" width="2" height="2" fill="#d0d0d0"/><rect x="1380" y="422" width="2" height="2" fill="#d0d0d0"/><rect x="1382" y="426" width="2" height="2" fill="#d0d0d0"/><rect x="1384" y="422" width="2" height="2" fill="#d0d0d0"/><rect x="1386" y="426" width="2" height="2" fill="#d0d0d0"/><rect x="1388" y="422" width="2" height="2" fill="#d0d0d0"/><rect x="1390" y="426" width="2" height="2" fill="#d0d0d0"/></svg>
<div class="r" style="left:1563px;top:437px;width:16px;height:915px;background:#3d3d3d;border-radius:6px 6px 0 0;"></div>
<div class="r" style="left:1176px;top:438px;width:382px;height:266px;background:#525252;border-radius:4px;"></div>
<div class="t" style="left:1214.50px;top:448.01px;font-size:22px;line-height:22px;color:#ffffff;font-weight:bold;transform:scaleX(0.9837);">General</div>
<svg width="1584" height="1355" style="left:0;top:0;pointer-events:none"><polygon points="1188.4,452 1202,452 1195.2,462" fill="#a8a8a8"/><rect x="1533" y="452" width="2" height="2" fill="#8a8a8a"/><rect x="1537" y="452" width="2" height="2" fill="#8a8a8a"/><rect x="1541" y="452" width="2" height="2" fill="#8a8a8a"/><rect x="1533" y="456" width="2" height="2" fill="#8a8a8a"/><rect x="1537" y="456" width="2" height="2" fill="#8a8a8a"/><rect x="1541" y="456" width="2" height="2" fill="#8a8a8a"/><rect x="1533" y="460" width="2" height="2" fill="#8a8a8a"/><rect x="1537" y="460" width="2" height="2" fill="#8a8a8a"/><rect x="1541" y="460" width="2" height="2" fill="#8a8a8a"/></svg>
<div class="t" style="left:1207.3px;top:482.99px;width:312.02px;overflow:hidden;font-size:23px;line-height:23px;height:27px;color:#f8f8f8;transform:scaleX(0.89);">Enabled<span style="letter-spacing:0.35px">................................................................................</span></div>
<div class="r" style="left:1497.6px;top:479.9px;width:26.700000000000045px;height:26.399999999999977px;background:#666666;box-shadow:0 0 0 1px #4b4b4b;"></div>
<svg width="1584" height="1355" style="left:0;top:0"><path d="M1502.1 493.09999999999997 L1503.2 489.7 L1507.7 493.09999999999997 L1520 486.09999999999997 L1506.5 500.9 Z" fill="#e0e0e0"/></svg>
<div class="t" style="left:1207.30px;top:516.89px;font-size:23px;line-height:23px;color:#f8f8f8;font-weight:normal;transform:scaleX(0.9151);">Width</div>
<div class="r" style="left:1382px;top:512px;width:103.40000000000009px;height:31px;background:#636363;box-shadow:inset 0 0 0 1px #5c5c5c;"></div>
<div class="t" style="left:1386.50px;top:517.09px;font-size:23px;line-height:23px;color:#f4f4f4;font-weight:normal;transform:scaleX(0.8500);">25000.0</div>
<svg width="1584" height="1355" style="left:0;top:0"><polygon points="1468,525.5 1479.3,525.5 1473.65,516.8" fill="#d4d4d4"/><polygon points="1468,528.9 1479.3,528.9 1473.65,537.5" fill="#d4d4d4"/></svg>
<div class="r" style="left:1495px;top:512px;width:31px;height:31px;background:#5e5e5e;border-radius:7px;box-shadow:inset 0 0 0 1px #4e4e4e;"></div>
<div class="t" style="left:1506.00px;top:516.89px;font-size:23px;line-height:23px;color:#e0e0e0;font-weight:normal;transform:scaleX(0.9000);">L</div>
<div class="t" style="left:1207.30px;top:550.39px;font-size:23px;line-height:23px;color:#f8f8f8;font-weight:normal;transform:scaleX(0.8927);">Length</div>
<div class="r" style="left:1382px;top:546px;width:103.40000000000009px;height:31px;background:#636363;box-shadow:inset 0 0 0 1px #5c5c5c;"></div>
<div class="t" style="left:1386.50px;top:551.09px;font-size:23px;line-height:23px;color:#f4f4f4;font-weight:normal;transform:scaleX(0.8500);">25000.0</div>
<svg width="1584" height="1355" style="left:0;top:0"><polygon points="1468,559.5 1479.3,559.5 1473.65,550.8" fill="#d4d4d4"/><polygon points="1468,562.9 1479.3,562.9 1473.65,571.5" fill="#d4d4d4"/></svg>
<div class="r" style="left:1207.8px;top:580px;width:318.70000000000005px;height:40px;background:#636363;border-radius:6px;box-shadow:inset 0 0 0 1px #5a5a5a;"></div>
<div class="t" style="left:1240.95px;top:590.59px;font-size:23px;line-height:23px;color:#d4d4d4;font-weight:normal;transform:scaleX(0.9313);">Fit aspect ratio to bitmap...</div>
<div class="r" style="left:1207.8px;top:622.2px;width:318.70000000000005px;height:39.799999999999955px;background:#636363;border-radius:6px;box-shadow:inset 0 0 0 1px #5a5a5a;"></div>
<div class="t" style="left:1244.15px;top:632.79px;font-size:23px;line-height:23px;color:#d4d4d4;font-weight:normal;transform:scaleX(0.9297);">Fit aspect ratio to material</div>
<div class="t" style="left:1207.3px;top:668.89px;width:178.31px;overflow:hidden;font-size:23px;line-height:23px;height:27px;color:#f8f8f8;transform:scaleX(0.89);">Mask<span style="letter-spacing:0.35px">................................................................................</span></div>
<div class="r" style="left:1375.6px;top:664px;width:150.9000000000001px;height:30.600000000000023px;background:#636363;border-radius:6px;box-shadow:inset 0 0 0 1px #5a5a5a;"></div>
<div class="t" style="left:1415.85px;top:668.89px;font-size:23px;line-height:23px;color:#d4d4d4;font-weight:normal;transform:scaleX(0.8729);">No Map</div>
<div class="r" style="left:1176px;top:712px;width:382px;height:249px;background:#525252;border-radius:4px;"></div>
<div class="t" style="left:1214.50px;top:722.51px;font-size:22px;line-height:22px;color:#ffffff;font-weight:bold;transform:scaleX(0.9984);">Projection</div>
<svg width="1584" height="1355" style="left:0;top:0;pointer-events:none"><polygon points="1188.4,726 1202,726 1195.2,736" fill="#a8a8a8"/><rect x="1533" y="726" width="2" height="2" fill="#8a8a8a"/><rect x="1537" y="726" width="2" height="2" fill="#8a8a8a"/><rect x="1541" y="726" width="2" height="2" fill="#8a8a8a"/><rect x="1533" y="730" width="2" height="2" fill="#8a8a8a"/><rect x="1537" y="730" width="2" height="2" fill="#8a8a8a"/><rect x="1541" y="730" width="2" height="2" fill="#8a8a8a"/><rect x="1533" y="734" width="2" height="2" fill="#8a8a8a"/><rect x="1537" y="734" width="2" height="2" fill="#8a8a8a"/><rect x="1541" y="734" width="2" height="2" fill="#8a8a8a"/></svg>
<div class="t" style="left:1207.3px;top:756.99px;width:232.02px;overflow:hidden;font-size:23px;line-height:23px;height:27px;color:#f0f0f0;transform:scaleX(0.89);">Projection depth<span style="letter-spacing:0.35px">................................................................................</span></div>
<div class="r" style="left:1423px;top:752.2px;width:103px;height:31.0px;background:#636363;box-shadow:inset 0 0 0 1px #5c5c5c;"></div>
<div class="r" style="left:1428px;top:752.2px;width:72px;height:31px;overflow:hidden">
<div class="t" style="left:0;top:5.09px;font-size:23px;line-height:23px;color:#f4f4f4;transform:scaleX(0.85)">1500.0mm</div></div>
<svg width="1584" height="1355" style="left:0;top:0"><polygon points="1509,765.7 1520.3,765.7 1514.65,757.0" fill="#d4d4d4"/><polygon points="1509,769.1 1520.3,769.1 1514.65,777.7" fill="#d4d4d4"/></svg>
<div class="t" style="left:1207.3px;top:790.99px;width:232.02px;overflow:hidden;font-size:23px;line-height:23px;height:27px;color:#f0f0f0;transform:scaleX(0.89);">Projection offset %<span style="letter-spacing:0.35px">................................................................................</span></div>
<div class="r" style="left:1423px;top:786.2px;width:103px;height:31.0px;background:#636363;box-shadow:inset 0 0 0 1px #5c5c5c;"></div>
<div class="t" style="left:1427.50px;top:791.29px;font-size:23px;line-height:23px;color:#f4f4f4;font-weight:normal;transform:scaleX(0.8500);">0.0</div>
<svg width="1584" height="1355" style="left:0;top:0"><polygon points="1509,799.7 1520.3,799.7 1514.65,791.0" fill="#d4d4d4"/><polygon points="1509,803.1 1520.3,803.1 1514.65,811.7" fill="#d4d4d4"/></svg>
<div class="t" style="left:1207.3px;top:824.99px;width:232.02px;overflow:hidden;font-size:23px;line-height:23px;height:27px;color:#f0f0f0;transform:scaleX(0.89);">Bend<span style="letter-spacing:0.35px">................................................................................</span></div>
<div class="r" style="left:1423px;top:820.2px;width:103px;height:31.0px;background:#636363;box-shadow:inset 0 0 0 1px #5c5c5c;"></div>
<div class="t" style="left:1427.50px;top:825.29px;font-size:23px;line-height:23px;color:#f4f4f4;font-weight:normal;transform:scaleX(0.8500);">0.0</div>
<svg width="1584" height="1355" style="left:0;top:0"><polygon points="1509,833.7 1520.3,833.7 1514.65,825.0" fill="#d4d4d4"/><polygon points="1509,837.1 1520.3,837.1 1514.65,845.7" fill="#d4d4d4"/></svg>
<div class="t" style="left:1207.3px;top:858.99px;width:232.02px;overflow:hidden;font-size:23px;line-height:23px;height:27px;color:#f0f0f0;transform:scaleX(0.89);">Normal angle<span style="letter-spacing:0.35px">................................................................................</span></div>
<div class="r" style="left:1423px;top:854.2px;width:103px;height:31.0px;background:#636363;box-shadow:inset 0 0 0 1px #5c5c5c;"></div>
<div class="t" style="left:1427.50px;top:859.29px;font-size:23px;line-height:23px;color:#f4f4f4;font-weight:normal;transform:scaleX(0.8500);">90.0</div>
<svg width="1584" height="1355" style="left:0;top:0"><polygon points="1509,867.7 1520.3,867.7 1514.65,859.0" fill="#d4d4d4"/><polygon points="1509,871.1 1520.3,871.1 1514.65,879.7" fill="#d4d4d4"/></svg>
<div class="t" style="left:1207.3px;top:892.99px;width:312.02px;overflow:hidden;font-size:23px;line-height:23px;height:27px;color:#f8f8f8;transform:scaleX(0.89);">Fade out<span style="letter-spacing:0.35px">................................................................................</span></div>
<div class="r" style="left:1497.6px;top:889.8px;width:26.700000000000045px;height:26.399999999999977px;background:#666666;box-shadow:0 0 0 1px #4b4b4b;"></div>
<div class="t" style="left:1207.3px;top:926.99px;width:228.88px;overflow:hidden;font-size:23px;line-height:23px;height:27px;color:#8a8a8a;transform:scaleX(0.89);">Fade out angle<span style="letter-spacing:0.35px">................................................................................</span></div>
<div class="r" style="left:1423px;top:922.2px;width:103px;height:31.0px;background:#5a5a5a;box-shadow:inset 0 0 0 1px #616161;"></div>
<div class="t" style="left:1427.50px;top:927.29px;font-size:23px;line-height:23px;color:#8a8a8a;font-weight:normal;transform:scaleX(0.8500);">90.0</div>
<svg width="1584" height="1355" style="left:0;top:0"><polygon points="1509,935.7 1520.3,935.7 1514.65,927.0" fill="#8a8a8a"/><polygon points="1509,939.1 1520.3,939.1 1514.65,947.7" fill="#8a8a8a"/></svg>
<div class="r" style="left:1176px;top:970px;width:382px;height:326px;background:#525252;border-radius:4px;"></div>
<div class="t" style="left:1214.50px;top:979.91px;font-size:22px;line-height:22px;color:#ffffff;font-weight:bold;transform:scaleX(0.9699);">Options</div>
<svg width="1584" height="1355" style="left:0;top:0;pointer-events:none"><polygon points="1188.4,984 1202,984 1195.2,994" fill="#a8a8a8"/><rect x="1533" y="984" width="2" height="2" fill="#8a8a8a"/><rect x="1537" y="984" width="2" height="2" fill="#8a8a8a"/><rect x="1541" y="984" width="2" height="2" fill="#8a8a8a"/><rect x="1533" y="988" width="2" height="2" fill="#8a8a8a"/><rect x="1537" y="988" width="2" height="2" fill="#8a8a8a"/><rect x="1541" y="988" width="2" height="2" fill="#8a8a8a"/><rect x="1533" y="992" width="2" height="2" fill="#8a8a8a"/><rect x="1537" y="992" width="2" height="2" fill="#8a8a8a"/><rect x="1541" y="992" width="2" height="2" fill="#8a8a8a"/></svg>
<div class="r" style="left:1207.8px;top:1010px;width:318.70000000000005px;height:40px;background:#636363;border-radius:6px;box-shadow:inset 0 0 0 1px #5a5a5a;"></div>
<div class="t" style="left:1323.15px;top:1020.59px;font-size:23px;line-height:23px;color:#d4d4d4;font-weight:normal;transform:scaleX(0.8713);">Exclude...</div>
<div class="t" style="left:1207.3px;top:1056.99px;width:232.02px;overflow:hidden;font-size:23px;line-height:23px;height:27px;color:#f8f8f8;transform:scaleX(0.89);">Order<span style="letter-spacing:0.35px">................................................................................</span></div>
<div class="r" style="left:1423px;top:1052.2px;width:103px;height:31.0px;background:#636363;box-shadow:inset 0 0 0 1px #5c5c5c;"></div>
<div class="t" style="left:1427.50px;top:1057.29px;font-size:23px;line-height:23px;color:#f4f4f4;font-weight:normal;transform:scaleX(0.8500);">0</div>
<svg width="1584" height="1355" style="left:0;top:0"><polygon points="1509,1065.7 1520.3,1065.7 1514.65,1057.0" fill="#d4d4d4"/><polygon points="1509,1069.1000000000001 1520.3,1069.1000000000001 1514.65,1077.7" fill="#d4d4d4"/></svg>
<div class="t" style="left:1207.3px;top:1090.99px;width:312.02px;overflow:hidden;font-size:23px;line-height:23px;height:27px;color:#f8f8f8;transform:scaleX(0.89);">Back side<span style="letter-spacing:0.35px">................................................................................</span></div>
<div class="r" style="left:1497.6px;top:1088px;width:26.700000000000045px;height:26.40000000000009px;background:#666666;box-shadow:0 0 0 1px #4b4b4b;"></div>
<svg width="1584" height="1355" style="left:0;top:0"><path d="M1502.1 1101.2 L1503.2 1097.8 L1507.7 1101.2 L1520 1094.2 L1506.5 1109 Z" fill="#e0e0e0"/></svg>
<div class="t" style="left:1207.3px;top:1124.99px;width:315.39px;overflow:hidden;font-size:23px;line-height:23px;height:27px;color:#f8f8f8;transform:scaleX(0.89);">Use only decal displacement<span style="letter-spacing:0.35px">................................................................................</span></div>
<div class="r" style="left:1497.6px;top:1122px;width:26.700000000000045px;height:26.40000000000009px;background:#666666;box-shadow:0 0 0 1px #4b4b4b;"></div>
<div class="t" style="left:1207.3px;top:1158.99px;width:312.02px;overflow:hidden;font-size:23px;line-height:23px;height:27px;color:#f8f8f8;transform:scaleX(0.89);">Use decal user properties<span style="letter-spacing:0.35px">................................................................................</span></div>
<div class="r" style="left:1497.6px;top:1156px;width:26.700000000000045px;height:26.40000000000009px;background:#666666;box-shadow:0 0 0 1px #4b4b4b;"></div>
<svg width="1584" height="1355" style="left:0;top:0"><path d="M1502.1 1169.2 L1503.2 1165.8 L1507.7 1169.2 L1520 1162.2 L1506.5 1177 Z" fill="#e0e0e0"/></svg>
<div class="t" style="left:1207.3px;top:1192.99px;width:312.02px;overflow:hidden;font-size:23px;line-height:23px;height:27px;color:#f8f8f8;transform:scaleX(0.89);">Use only decal bump<span style="letter-spacing:0.35px">................................................................................</span></div>
<div class="r" style="left:1497.6px;top:1190px;width:26.700000000000045px;height:26.40000000000009px;background:#666666;box-shadow:0 0 0 1px #4b4b4b;"></div>
<div class="t" style="left:1207.3px;top:1226.99px;width:232.02px;overflow:hidden;font-size:23px;line-height:23px;height:27px;color:#f8f8f8;transform:scaleX(0.89);">Surface bump %<span style="letter-spacing:0.35px">................................................................................</span></div>
<div class="r" style="left:1423px;top:1222px;width:103px;height:31px;background:#636363;box-shadow:inset 0 0 0 1px #5c5c5c;"></div>
<div class="t" style="left:1427.50px;top:1227.09px;font-size:23px;line-height:23px;color:#f4f4f4;font-weight:normal;transform:scaleX(0.8500);">100.0</div>
<svg width="1584" height="1355" style="left:0;top:0"><polygon points="1509,1235.5 1520.3,1235.5 1514.65,1226.8" fill="#d4d4d4"/><polygon points="1509,1238.9 1520.3,1238.9 1514.65,1247.5" fill="#d4d4d4"/></svg>
<div class="t" style="left:1207.3px;top:1260.99px;width:312.02px;overflow:hidden;font-size:23px;line-height:23px;height:27px;color:#f8f8f8;transform:scaleX(0.89);">Render when hidden<span style="letter-spacing:0.35px">................................................................................</span></div>
<div class="r" style="left:1497.6px;top:1257.4px;width:26.700000000000045px;height:26.40000000000009px;background:#666666;box-shadow:0 0 0 1px #4b4b4b;"></div>
<div class="r" style="left:1176px;top:1304px;width:382px;height:38px;background:#525252;border-radius:4px;"></div>
<div class="t" style="left:1214.50px;top:1314.71px;font-size:22px;line-height:22px;color:#ffffff;font-weight:bold;transform:scaleX(1.0227);">Viewport</div>
<svg width="1584" height="1355" style="left:0;top:0;pointer-events:none"><polygon points="1190,1316.5 1200,1323.5 1190,1330.5" fill="#a8a8a8"/><rect x="1533" y="1318.5" width="2" height="2" fill="#8a8a8a"/><rect x="1537" y="1318.5" width="2" height="2" fill="#8a8a8a"/><rect x="1541" y="1318.5" width="2" height="2" fill="#8a8a8a"/><rect x="1533" y="1322.5" width="2" height="2" fill="#8a8a8a"/><rect x="1537" y="1322.5" width="2" height="2" fill="#8a8a8a"/><rect x="1541" y="1322.5" width="2" height="2" fill="#8a8a8a"/><rect x="1533" y="1326.5" width="2" height="2" fill="#8a8a8a"/><rect x="1537" y="1326.5" width="2" height="2" fill="#8a8a8a"/><rect x="1541" y="1326.5" width="2" height="2" fill="#8a8a8a"/></svg>
</body></html>
